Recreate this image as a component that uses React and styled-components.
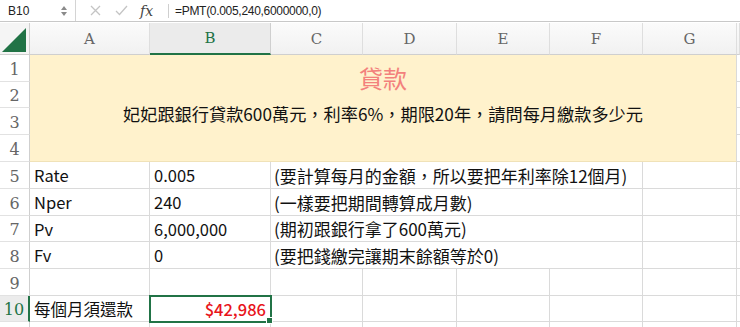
import React from 'react';
import styled, { createGlobalStyle } from 'styled-components';

const GlobalStyle = createGlobalStyle`
    html, body {
        margin: 0;
        padding: 0;
        background: #ffffff;
        overflow: hidden;
    }
`;

const CJK = `"Noto Sans CJK TC", "Noto Sans", sans-serif`;
const GREEN = '#217346';
const GRID = '#dadada';

const Page = styled.div`
    width: 740px;
    height: 327px;
    overflow: hidden;
`;

const FormulaBar = styled.div`
    display: flex;
    align-items: center;
    height: 21px;
    border-bottom: 1px solid #c8c8c8;
    margin-bottom: 1px;
    font-family: "Liberation Sans", Arial, sans-serif;
    font-size: 12px;
    color: #222;
`;

const NameBox = styled.div`
    display: flex;
    align-items: center;
    justify-content: space-between;
    width: 76px;
    height: 100%;
    padding: 0 8px;
    box-sizing: border-box;
    border-right: 1px solid #d4d4d4;
`;

const Spinner = styled.div`
    display: flex;
    flex-direction: column;
    gap: 2px;
`;

const Tri = styled.div`
    width: 0;
    height: 0;
    border-left: 3px solid transparent;
    border-right: 3px solid transparent;
    border-${p => (p.$up ? 'bottom' : 'top')}: 4px solid #8a8a8a;
`;

const ToolIcon = styled.div`
    display: flex;
    align-items: center;
    justify-content: center;
    width: 26px;
    height: 100%;
    color: #c4c4c4;
`;

const Fx = styled.div`
    width: 28px;
    padding-left: 6px;
    font-family: "DejaVu Serif", "Liberation Serif", serif;
    font-style: italic;
    font-size: 14px;
    color: #444;
    border-right: 1px solid #cfcfcf;
    line-height: 14px;
`;

const FormulaText = styled.div`
    padding-left: 6px;
    letter-spacing: -0.3px;
`;

const Sheet = styled.div`
    display: grid;
    grid-template-columns: 30px 120px 121px 92px 94px 93px 93px 94px 3px;
    grid-template-rows: 32px 27px 26px 27px 27px 27px 27px 26px 27px 27px 26px 10px;
`;

const Corner = styled.div`
    background: #f5f5f5;
    border-right: 1px solid #cfcfcf;
    border-bottom: 1px solid #cfcfcf;
    display: flex;
    align-items: flex-end;
    justify-content: flex-end;
    padding: 0 3px 2px 0;
`;

const ColHead = styled.div`
    display: flex;
    align-items: center;
    justify-content: center;
    background: ${p => (p.$active ? '#ebebeb' : 'linear-gradient(#fbfbfb, #f1f1f1)')};
    border-right: 1px solid ${p => (p.$active ? '#cfcfcf' : '#dedede')};
    border-bottom: ${p => (p.$active ? `2px solid ${GREEN}` : '1px solid #cfcfcf')};
    font-family: "DejaVu Serif", "Liberation Serif", serif;
    font-size: 15px;
    color: ${p => (p.$active ? GREEN : '#666')};
    box-sizing: border-box;
`;

const RowHead = styled.div`
    display: flex;
    align-items: flex-end;
    justify-content: center;
    padding-bottom: 1px;
    background: ${p => (p.$active ? '#ececec' : '#ffffff')};
    border-right: ${p => (p.$active ? `2px solid ${GREEN}` : '1px solid #cfcfcf')};
    border-bottom: 1px solid #e2e2e2;
    font-family: "DejaVu Serif", "Liberation Serif", serif;
    font-size: 16px;
    line-height: 20px;
    color: ${p => (p.$active ? GREEN : '#666')};
    box-sizing: border-box;
`;

const Cell = styled.div`
    display: flex;
    align-items: center;
    justify-content: ${p => (p.$right ? 'flex-end' : 'flex-start')};
    padding: 0 4px;
    border-right: 1px solid ${GRID};
    border-bottom: 1px solid ${GRID};
    font-family: ${CJK};
    font-size: 16.5px;
    color: #111;
    white-space: nowrap;
    overflow: visible;
    box-sizing: border-box;
    min-width: 0;
`;

const Banner = styled.div`
    grid-column: 2 / 9;
    grid-row: 2 / 6;
    background: #fff2cc;
    border-right: 1px solid ${GRID};
    border-bottom: 1px solid #f0e2b8;
    display: flex;
    flex-direction: column;
    align-items: center;
    font-family: ${CJK};
    padding-top: 6px;
    box-sizing: border-box;
`;

const Title = styled.div`
    font-size: 24px;
    line-height: 34px;
    color: #f3817c;
`;

const Subtitle = styled.div`
    margin-top: 5px;
    font-size: 17.2px;
    line-height: 28px;
    color: #111;
`;

const Note = styled(Cell)`
    grid-column: 4 / 8;
    padding-left: 3px;
    font-size: 17px;
`;

const Selected = styled(Cell)`
    position: relative;
    outline: 2px solid ${GREEN};
    outline-offset: -1px;
    color: #e8141b;
    font-weight: 500;
    padding-right: 4px;
    &::after {
        content: '';
        position: absolute;
        right: -3px;
        bottom: -3px;
        width: 5px;
        height: 5px;
        background: ${GREEN};
        border: 1px solid #fff;
    }
`;

const columns = ['A', 'B', 'C', 'D', 'E', 'F', 'G'];

const params = [
    { label: 'Rate', value: '0.005', note: '(要計算每月的金額，所以要把年利率除12個月)' },
    { label: 'Nper', value: '240', note: '(一樣要把期間轉算成月數)' },
    { label: 'Pv', value: '6,000,000', note: '(期初跟銀行拿了600萬元)' },
    { label: 'Fv', value: '0', note: '(要把錢繳完讓期末餘額等於0)' }
];

const EmptyRest = ({ from }) =>
    columns.slice(from).map(c => <Cell key={c} />).concat(<Cell key="H" />);

export default function App() {
    return (
        <Page>
            <GlobalStyle />
            <FormulaBar>
                <NameBox>
                    <span>B10</span>
                    <Spinner>
                        <Tri $up />
                        <Tri />
                    </Spinner>
                </NameBox>
                <ToolIcon style={{ marginLeft: 6 }}>
                    <svg width="11" height="11" viewBox="0 0 11 11">
                        <path d="M1 1L10 10M10 1L1 10" stroke="currentColor" strokeWidth="1.3" />
                    </svg>
                </ToolIcon>
                <ToolIcon>
                    <svg width="13" height="11" viewBox="0 0 13 11">
                        <path d="M1 6L4.5 9.5L12 1" stroke="currentColor" strokeWidth="1.3" fill="none" />
                    </svg>
                </ToolIcon>
                <Fx>fx</Fx>
                <FormulaText>=PMT(0.005,240,6000000,0)</FormulaText>
            </FormulaBar>

            <Sheet>
                <Corner>
                    <svg width="24" height="24" viewBox="0 0 24 24">
                        <path d="M24 0L24 24L0 24Z" fill={GREEN} />
                    </svg>
                </Corner>
                {columns.map(c => (
                    <ColHead key={c} $active={c === 'B'}>{c}</ColHead>
                ))}
                <ColHead />

                <RowHead>1</RowHead>
                <Banner>
                    <Title>貸款</Title>
                    <Subtitle>妃妃跟銀行貸款600萬元，利率6%，期限20年，請問每月繳款多少元</Subtitle>
                </Banner>
                <Cell />
                <RowHead>2</RowHead>
                <Cell />
                <RowHead>3</RowHead>
                <Cell />
                <RowHead>4</RowHead>
                <Cell />

                {params.map((p, i) => (
                    <React.Fragment key={p.label}>
                        <RowHead>{i + 5}</RowHead>
                        <Cell>{p.label}</Cell>
                        <Cell>{p.value}</Cell>
                        <Note>{p.note}</Note>
                        <Cell />
                        <Cell />
                    </React.Fragment>
                ))}

                <RowHead>9</RowHead>
                <EmptyRest from={0} />

                <RowHead $active>10</RowHead>
                <Cell>每個月須還款</Cell>
                <Selected $right>$42,986</Selected>
                <EmptyRest from={2} />

                <RowHead />
                <EmptyRest from={0} />
            </Sheet>
        </Page>
    );
}
